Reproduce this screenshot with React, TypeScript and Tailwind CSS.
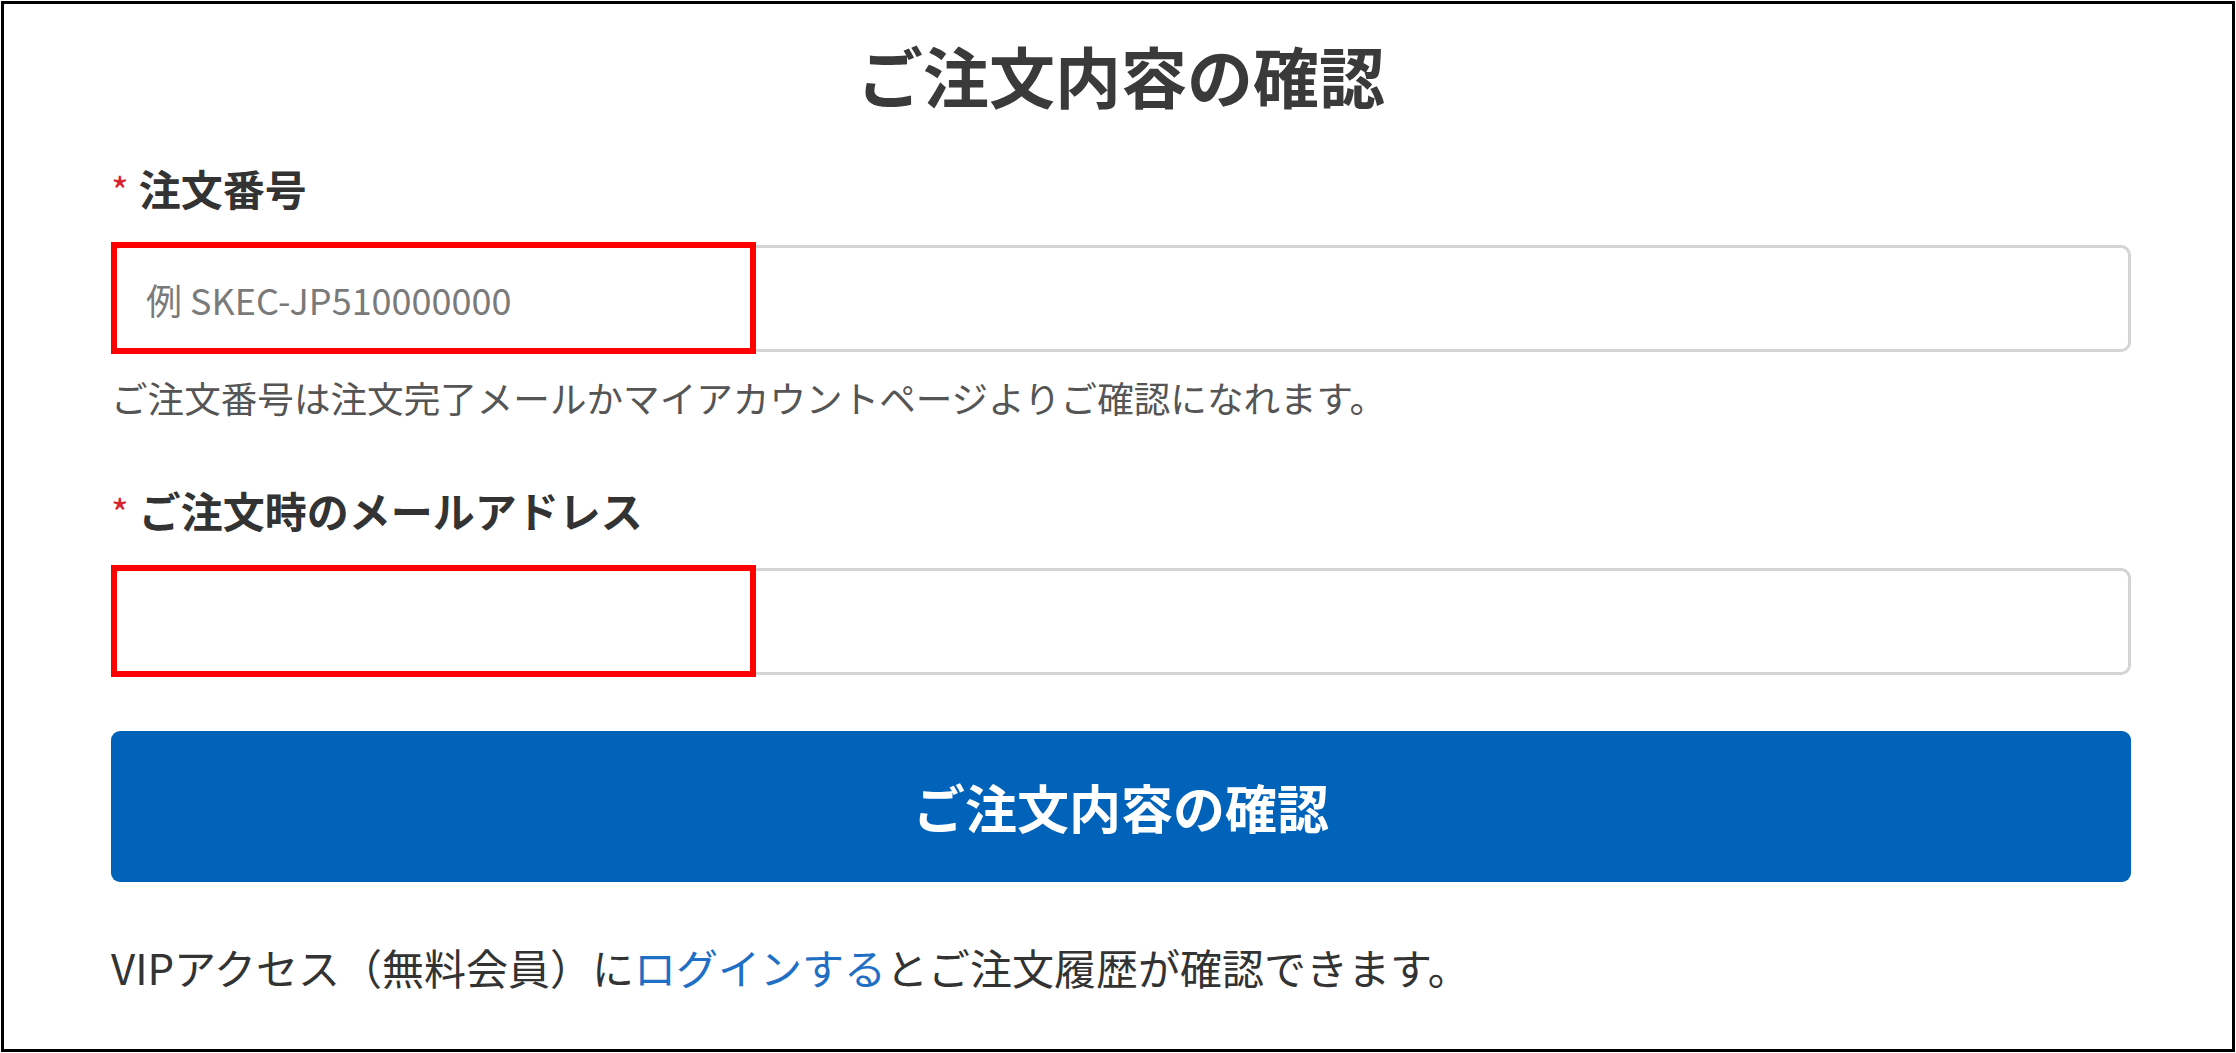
import React from 'react';

const font = { fontFamily: '"Noto Sans CJK JP", "Noto Sans", sans-serif' };

const Label: React.FC<{ text: string }> = ({ text }) => (
  <div className="flex items-start h-[50px] leading-[50px]">
    <span className="text-[38px] leading-[38px] text-[#d9232e] mt-[8px] mr-[10px]">*</span>
    <span className="text-[42px] font-bold text-[#333333]">{text}</span>
  </div>
);

const Field: React.FC<{ placeholder?: string }> = ({ placeholder }) => (
  <div className="relative">
    <input
      type="text"
      placeholder={placeholder}
      className="w-full h-[107px] px-[32px] text-[36px] text-[#333333] placeholder:text-[#7a7a7a] border-[3px] border-[#d4d4d4] rounded-[10px] bg-white outline-none"
      style={font}
    />
    {/* red annotation box */}
    <div className="absolute left-0 top-[-3px] w-[645px] h-[112px] border-[6px] border-[#ff0000] pointer-events-none" />
  </div>
);

const App: React.FC = () => {
  return (
    <div className="w-[2236px] h-[1053px] bg-white p-[1px]" style={font}>
      <div className="w-full h-full border-[3px] border-black pl-[107px] pr-[101px]">
        <h1 className="mt-[30px] h-[80px] leading-[80px] text-center text-[66px] font-bold text-[#3a3a3a]">
          ご注文内容の確認
        </h1>

        <div className="mt-[49px]">
          <Label text="注文番号" />
        </div>
        <div className="mt-[32px]">
          <Field placeholder="例 SKEC-JP510000000" />
        </div>
        <p className="mt-[21px] h-[50px] leading-[50px] text-[36.6px] text-[#555555]">
          ご注文番号は注文完了メールかマイアカウントページよりご確認になれます。
        </p>

        <div className="mt-[62px]">
          <Label text="ご注文時のメールアドレス" />
        </div>
        <div className="mt-[33px]">
          <Field />
        </div>

        <button
          type="button"
          className="mt-[56px] w-full h-[151px] rounded-[9px] bg-[#0062b8] text-white text-[52px] font-bold"
          style={font}
        >
          ご注文内容の確認
        </button>

        <p className="mt-[60px] h-[50px] leading-[50px] text-[42px] text-[#333333]">
          VIPアクセス（無料会員）に<a href="#" className="text-[#1f6fc5]">ログインする</a>とご注文履歴が確認できます。
        </p>
      </div>
    </div>
  );
};

export default App;
